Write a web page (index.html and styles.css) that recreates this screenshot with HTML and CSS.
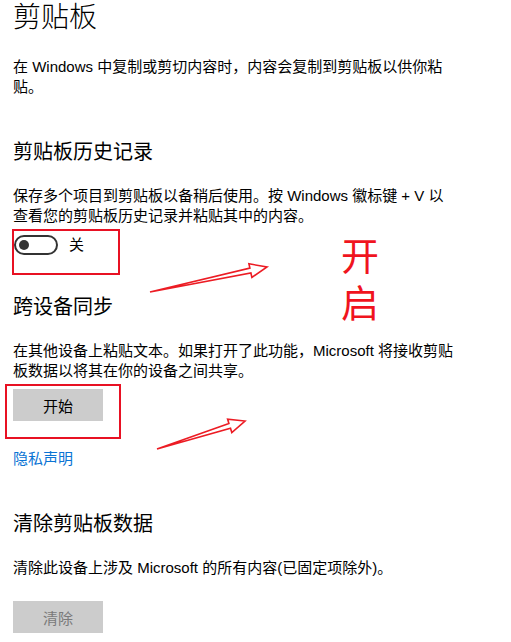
FILE: index.html
```html
<!DOCTYPE html>
<html lang="zh-CN">
<head>
<meta charset="utf-8">
<title>剪贴板</title>
<link rel="stylesheet" href="styles.css">
</head>
<body>
<main class="page">
  <h1 class="title">剪贴板</h1>
  <p class="desc first">在 Windows 中复制或剪切内容时，内容会复制到剪贴板以供你粘贴。</p>

  <h2 class="heading">剪贴板历史记录</h2>
  <p class="desc">保存多个项目到剪贴板以备稍后使用。按 Windows 徽标键 + V 以查看您的剪贴板历史记录并粘贴其中的内容。</p>
  <div class="toggle-row">
    <span class="toggle"><span class="knob"></span></span>
    <span class="toggle-label">关</span>
  </div>

  <h2 class="heading sync">跨设备同步</h2>
  <p class="desc">在其他设备上粘贴文本。如果打开了此功能，Microsoft 将接收剪贴板数据以将其在你的设备之间共享。</p>
  <button class="btn btn-start">开始</button>
  <a class="link" href="#">隐私声明</a>

  <h2 class="heading">清除剪贴板数据</h2>
  <p class="desc">清除此设备上涉及 Microsoft 的所有内容(已固定项除外)。</p>
  <button class="btn btn-clear" disabled>清除</button>
</main>

<div class="annot box-toggle"></div>
<div class="annot box-start"></div>
<div class="annot note">
  <div class="note-char">开</div>
  <div class="note-char">启</div>
</div>
<svg class="annot arrows" width="511" height="642" viewBox="0 0 511 642" xmlns="http://www.w3.org/2000/svg">
  <polygon points="150,292 249.9,268.1 248.9,263.8 267,267 251.9,277.4 250.9,273 150,292" fill="none" stroke="#ec1c24" stroke-width="1.6" stroke-linejoin="miter"/>
  <polygon points="157,449 228.9,423.4 227.6,419.1 245,421 231.8,432.5 230.5,428.2 157,449" fill="none" stroke="#ec1c24" stroke-width="1.6" stroke-linejoin="miter"/>
</svg>
</body>
</html>
```

FILE: styles.css
```css
html, body {
  margin: 0;
  padding: 0;
  background: #fff;
}

body {
  width: 511px;
  height: 642px;
  overflow: hidden;
  position: relative;
  font-family: "Liberation Sans", "Noto Sans CJK SC", sans-serif;
  color: #000;
}

.page {
  display: flex;
  flex-direction: column;
  align-items: flex-start;
  padding-left: 13px;
  width: 443px;
}

.title {
  margin: 0;
  font-size: 28px;
  line-height: 34px;
  font-weight: 300;
  padding-top: 1px;
}

.heading {
  margin: 41px 0 0;
  font-size: 20px;
  line-height: 28px;
  font-weight: 400;
}

.heading.sync {
  margin-top: 38px;
}

.desc {
  margin: 20px 0 0;
  font-size: 15px;
  line-height: 20px;
}

.desc.first {
  margin-top: 22px;
}

.toggle-row {
  margin-top: 9px;
  display: flex;
  align-items: center;
  gap: 11px;
  padding-left: 1px;
}

.toggle {
  box-sizing: border-box;
  width: 44px;
  height: 20px;
  border: 2px solid #333;
  border-radius: 10px;
  display: flex;
  align-items: center;
  padding-left: 3px;
}

.knob {
  width: 10px;
  height: 10px;
  border-radius: 50%;
  background: #333;
}

.toggle-label {
  font-size: 15px;
  line-height: 20px;
}

.btn {
  margin-top: 8px;
  width: 90px;
  height: 32px;
  border: none;
  padding: 0;
  background: #ccc;
  font-family: inherit;
  font-size: 15px;
  color: #000;
}

.btn-clear {
  margin-top: 23px;
  color: #7a7a7a;
}

.link {
  margin-top: 28px;
  font-size: 15px;
  line-height: 20px;
  color: #0a74d4;
  text-decoration: none;
}

.annot {
  position: absolute;
  pointer-events: none;
}

.box-toggle {
  left: 12px;
  top: 229px;
  width: 104px;
  height: 42px;
  border: 2px solid #e81123;
}

.box-start {
  left: 5px;
  top: 384px;
  width: 112px;
  height: 51px;
  border: 2px solid #e81123;
}

.note {
  left: 341px;
  top: 230px;
  font-family: "Noto Sans CJK SC", sans-serif;
  font-size: 38px;
  font-weight: 400;
  color: #f0141e;
}

.note-char {
  height: 47px;
  line-height: 47px;
}

.arrows {
  left: 0;
  top: 0;
}
```
